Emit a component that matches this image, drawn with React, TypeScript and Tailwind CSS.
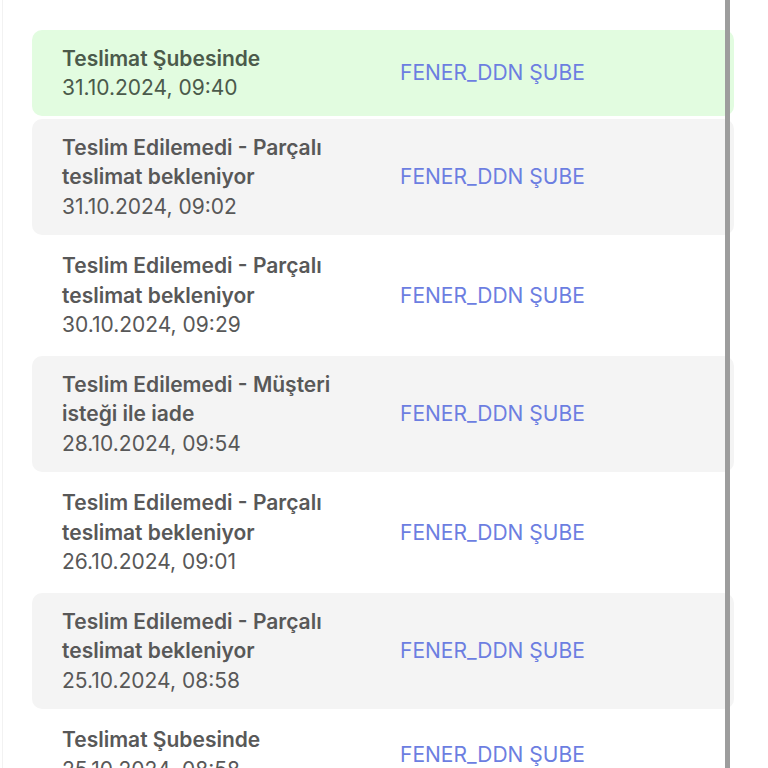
type Step = {
  title: string;
  date: string;
  branch: string;
};

const steps: Step[] = [
  { title: 'Teslimat Şubesinde', date: '31.10.2024, 09:40', branch: 'FENER_DDN ŞUBE' },
  { title: 'Teslim Edilemedi - Parçalı teslimat bekleniyor', date: '31.10.2024, 09:02', branch: 'FENER_DDN ŞUBE' },
  { title: 'Teslim Edilemedi - Parçalı teslimat bekleniyor', date: '30.10.2024, 09:29', branch: 'FENER_DDN ŞUBE' },
  { title: 'Teslim Edilemedi - Müşteri isteği ile iade', date: '28.10.2024, 09:54', branch: 'FENER_DDN ŞUBE' },
  { title: 'Teslim Edilemedi - Parçalı teslimat bekleniyor', date: '26.10.2024, 09:01', branch: 'FENER_DDN ŞUBE' },
  { title: 'Teslim Edilemedi - Parçalı teslimat bekleniyor', date: '25.10.2024, 08:58', branch: 'FENER_DDN ŞUBE' },
  { title: 'Teslimat Şubesinde', date: '25.10.2024, 08:58', branch: 'FENER_DDN ŞUBE' },
];

function StepRow({ step, index }: { step: Step; index: number }) {
  const first = index === 0;
  const shaded = index % 2 === 1;
  const bg = first ? 'bg-[#e2fce0]' : shaded ? 'bg-[#f4f4f4]' : 'bg-white';
  const textColor = first ? 'text-[#4b5a4b]' : 'text-[#585858]';

  return (
    <div className={`flex items-center rounded-[10px] py-[13.5px] pl-[30px] ${bg}`}>
      <div className={`w-[338px] shrink-0 pr-[14px] text-[21px] leading-[29.5px] ${textColor}`}>
        <div className="font-semibold">{step.title}</div>
        <div>{step.date}</div>
      </div>
      <div className="text-[21px] leading-[29.5px] text-[#6c7ee1]">{step.branch}</div>
    </div>
  );
}

export default function App() {
  return (
    <div
      className="relative h-[768px] w-[768px] overflow-hidden bg-white"
      style={{ fontFamily: 'Inter, "Noto Sans", sans-serif' }}
    >
      <div className="absolute left-[2px] top-0 h-full w-px bg-[#f2f2f2]" />
      <div className="flex w-[734px] flex-col gap-[3px] pl-[32px] pt-[30px]">
        {steps.map((s, i) => (
          <StepRow key={i} step={s} index={i} />
        ))}
      </div>
      <div className="absolute left-[725px] top-0 h-full w-[5px] bg-[#9d9d9d]" />
    </div>
  );
}
